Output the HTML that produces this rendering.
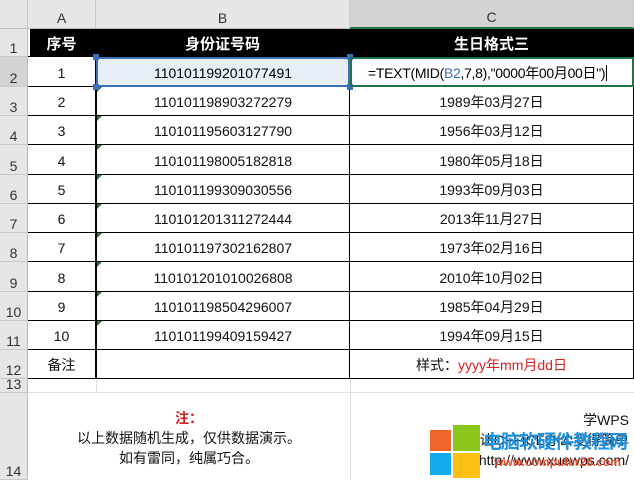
<!DOCTYPE html><html><head><meta charset="utf-8"><style>
body{margin:0;width:634px;height:482px;overflow:hidden;background:#fff;font-family:"Liberation Sans","Noto Sans CJK SC",sans-serif;position:relative}
div{position:absolute;box-sizing:border-box}
.rh{left:0;width:28px;background:#e6e6e6;border-bottom:1px solid #c8c8c8;border-right:1px solid #bdbdbd;font-size:14px;color:#333;text-align:center;display:flex;align-items:flex-end;justify-content:center;padding-bottom:0px}
.ch{top:0;height:29px;background:#e6e6e6;border-right:1px solid #c8c8c8;border-bottom:1px solid #bdbdbd;font-size:14px;color:#333;display:flex;align-items:flex-end;justify-content:center;padding-bottom:2px}
.c{font-size:14px;color:#111;display:flex;align-items:center;justify-content:center;border-right:1px solid #000;border-bottom:1px solid #000;padding-top:2px}
.tri{width:0;height:0;border-top:5px solid #1e7a3a;border-right:5px solid transparent}
</style></head><body>
<div class="ch" style="left:0;width:28px"></div>
<div class="ch" style="left:28px;width:68px">A</div>
<div class="ch" style="left:96px;width:254px">B</div>
<div class="ch" style="left:350px;width:284px;background:#d4d4d4;border-bottom:2px solid #217346">C</div>
<div style="left:30px;top:29px;width:604px;height:28px;background:#000"></div>
<div class="c" style="left:28px;top:29px;width:68px;height:28px;color:#fff;font-weight:bold;font-size:15px">序号</div>
<div class="c" style="left:96px;top:29px;width:254px;height:28px;color:#fff;font-weight:bold;font-size:15px">身份证号码</div>
<div class="c" style="left:350px;top:29px;width:284px;height:28px;color:#fff;font-weight:bold;font-size:15px">生日格式三</div>
<div id="rows"></div>
<script>
var tops=[0,29,57,87,116,145,175,204,233,262,292,321,350,379,393,480];
var ids=["110101199201077491","110101198903272279","110101195603127790","110101198005182818","110101199309030556","110101201311272444","110101197302162807","110101201010026808","110101198504296007","110101199409159427"];
var ds=["","1989年03月27日","1956年03月12日","1980年05月18日","1993年09月03日","2013年11月27日","1973年02月16日","2010年10月02日","1985年04月29日","1994年09月15日"];
var h="";
for(var r=1;r<=14;r++){var t=tops[r],hh=tops[r+1]-t;h+='<div class="rh" style="top:'+t+'px;height:'+hh+'px;'+(r==2?'background:#d4d4d4;':'')+'">'+r+'</div>';}
for(var i=0;i<10;i++){var r=i+2,t=tops[r],hh=tops[r+1]-t;
h+='<div class="c" style="left:28px;top:'+t+'px;width:68px;height:'+hh+'px">'+(i+1)+'</div>';
h+='<div class="c" style="left:96px;top:'+t+'px;width:254px;height:'+hh+'px;border-left:1px solid #000">'+ids[i]+'</div>';
if(i>0){h+='<div class="tri" style="left:97px;top:'+t+'px"></div>';h+='<div class="c" style="left:350px;top:'+t+'px;width:284px;height:'+hh+'px">'+ds[i]+'</div>';}}
h+='<div class="c" style="left:28px;top:350px;width:68px;height:29px">备注</div>';
h+='<div class="c" style="left:96px;top:350px;width:254px;height:29px;border-left:1px solid #000"></div>';
h+='<div class="c" style="left:350px;top:350px;width:284px;height:29px">样式：<span style="color:#e02020">yyyy年mm月dd日</span></div>';
document.getElementById("rows").outerHTML=h;
</script>
<div style="left:96px;top:379px;width:1px;height:14px;background:#e0e0e0"></div>
<div style="left:350px;top:379px;width:1px;height:101px;background:#e0e0e0"></div>
<div style="left:28px;top:392px;width:606px;height:1px;background:#e0e0e0"></div>
<div style="left:96px;top:57px;width:254px;height:30px;background:#e6eef8;border:2px solid #3d6fb6;font-size:14px;display:flex;align-items:center;justify-content:center;padding-top:2px">110101199201077491</div>
<div style="left:93px;top:54px;width:6px;height:6px;background:#3d6fb6"></div>
<div style="left:347px;top:54px;width:6px;height:6px;background:#3d6fb6"></div>
<div style="left:93px;top:84px;width:6px;height:6px;background:#3d6fb6"></div>
<div style="left:347px;top:84px;width:6px;height:6px;background:#3d6fb6"></div>
<div style="left:350px;top:57px;width:284px;height:30px;border:2px solid #217346;font-size:14px;padding-left:16px;padding-top:2px;display:flex;align-items:center;white-space:nowrap;letter-spacing:-0.3px">=TEXT(MID(<span style="color:#3d6fb6">B2</span>,7,8),"0000年00月00日")<span style="display:inline-block;width:1px;height:16px;background:#000;margin-left:1px"></span></div>
<div style="left:28px;top:408px;width:322px;text-align:center;font-size:14px;line-height:20px;color:#111"><b style="color:#d02020">注：</b><br>以上数据随机生成，仅供数据演示。<br>如有雷同，纯属巧合。</div>
<div style="left:350px;top:410px;width:279px;text-align:right;font-size:14px;line-height:20px;color:#111">学WPS<br>让OFFICE办公变得简单<br>http://www.xuewps.com/</div>
<div style="left:430px;top:430px;width:21px;height:21px;background:#f0662a"></div>
<div style="left:453px;top:425px;width:27px;height:26px;background:#8bc41a"></div>
<div style="left:430px;top:453px;width:21px;height:22px;background:#14aaef"></div>
<div style="left:453px;top:453px;width:27px;height:25px;background:#fec012"></div>
<div style="left:483px;top:427px;font-size:19px;font-weight:bold;color:#1e90e0;white-space:nowrap;letter-spacing:-1px">电脑软硬件教程网</div>
<div style="left:494px;top:455px;font-size:12px;font-weight:bold;color:#e05030;white-space:nowrap">www.computer26.com</div>
</body></html>
